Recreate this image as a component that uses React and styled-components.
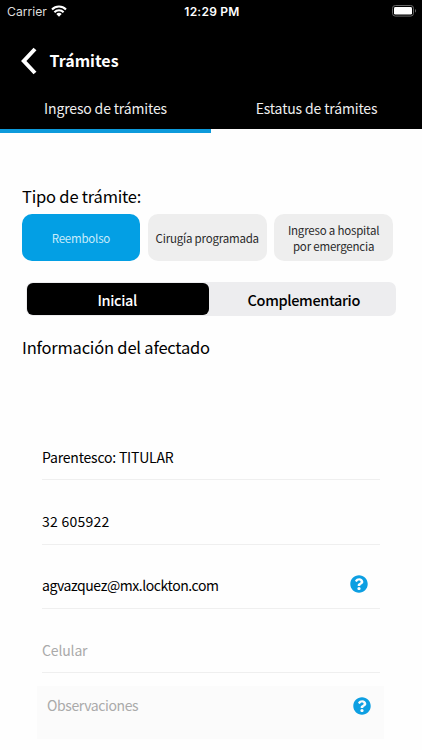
import React, { useState } from 'react';
import styled, { createGlobalStyle } from 'styled-components';
import { FaQuestionCircle } from 'react-icons/fa';

export default function App() {
    const [tab, setTab] = useState(0);
    const [tipo, setTipo] = useState(0);
    const [etapa, setEtapa] = useState(0);

    return (
        <Screen>
            <GlobalStyle />
            <Header>
                <StatusBar>
                    <Carrier>
                        <span>Carrier</span>
                        <Wifi />
                    </Carrier>
                    <Clock>12:29 PM</Clock>
                    <BatterySlot>
                        <Battery />
                    </BatterySlot>
                </StatusBar>
                <TitleBar>
                    <BackIcon />
                    <Title>Trámites</Title>
                </TitleBar>
                <Tabs>
                    <Tab $active={tab === 0} onClick={() => setTab(0)}>Ingreso de trámites</Tab>
                    <Tab $active={tab === 1} onClick={() => setTab(1)}>Estatus de trámites</Tab>
                </Tabs>
            </Header>
            <Content>
                <Heading>Tipo de trámite:</Heading>
                <Options>
                    <Option $active={tipo === 0} onClick={() => setTipo(0)}>Reembolso</Option>
                    <Option $active={tipo === 1} onClick={() => setTipo(1)}>Cirugía programada</Option>
                    <Option $active={tipo === 2} onClick={() => setTipo(2)}>
                        Ingreso a hospital<br />por emergencia
                    </Option>
                </Options>
                <Segmented>
                    <Segment $active={etapa === 0} onClick={() => setEtapa(0)}>Inicial</Segment>
                    <Segment $active={etapa === 1} onClick={() => setEtapa(1)}>Complementario</Segment>
                </Segmented>
                <Heading>Información del afectado</Heading>
                <Form>
                    <Field $spacing="-0.2px">Parentesco: TITULAR</Field>
                    <Field $spacing="0.25px">32 605922</Field>
                    <Field $spacing="-0.42px">
                        agvazquez@mx.lockton.com
                        <HelpIcon />
                    </Field>
                    <Field $empty $spacing="-0.15px">Celular</Field>
                </Form>
                <Notes>
                    Observaciones
                    <HelpIcon />
                </Notes>
            </Content>
        </Screen>
    )
}

function Wifi() {
    return (
        <svg width="16" height="12" viewBox="0 0 16 12" fill="none" stroke="#fff" strokeWidth="2.1">
            <path d="M1 4.4a10 10 0 0 1 14 0" />
            <path d="M3.4 7.2a6.5 6.5 0 0 1 9.2 0" />
            <path d="M5.3 9.1a3.8 3.8 0 0 1 5.4 0L8 11.8z" fill="#fff" stroke="none" />
        </svg>
    )
}

function Battery() {
    return (
        <svg width="25" height="12" viewBox="0 0 25 12">
            <rect x="0.5" y="0.5" width="21" height="10.6" rx="2.8" fill="none" stroke="#666" />
            <rect x="2" y="2" width="18" height="7.6" rx="1.4" fill="#fff" />
            <path d="M23 4v3.6c1.4-.5 1.4-3.1 0-3.6z" fill="#666" />
        </svg>
    )
}

function BackIcon() {
    return (
        <svg width="16" height="28" viewBox="0 0 16 28" fill="none" stroke="#fff" strokeWidth="4">
            <path d="M14 2L2.8 14L14 26" />
        </svg>
    )
}

const GlobalStyle = createGlobalStyle`
 body{
     margin:0;
     background:#fff;
     font-family:"Noto Sans CJK JP","Noto Sans",sans-serif;
 }
 *{
     box-sizing:border-box;
 }
`

const Screen = styled.div`
 width:422px;
 height:750px;
 overflow:hidden;
 background:#fefefe;
 color:#000;
`

const Header = styled.header`
 background:#000;
 color:#fff;
`

const StatusBar = styled.div`
 display:grid;
 grid-template-columns:1fr auto 1fr;
 align-items:center;
 height:22px;
 padding:0 5px 0 7px;
 font-family:Inter,sans-serif;
 font-size:12.2px;
`

const Carrier = styled.div`
 display:flex;
 align-items:center;
 gap:4px;
 color:#ddd;
`

const Clock = styled.div`
 font-size:12px;
 font-weight:600;
 letter-spacing:0.25px;
`

const BatterySlot = styled.div`
 display:flex;
 justify-content:flex-end;
`

const TitleBar = styled.div`
 display:flex;
 align-items:center;
 height:66px;
 padding:12px 0 0 21px;
 gap:12.5px;
`

const Title = styled.h1`
 margin:0 0 2px;
 font-size:16px;
 line-height:24px;
 font-weight:700;
`

const Tabs = styled.div`
 display:flex;
 height:45px;
`

const Tab = styled.div`
 flex:1;
 display:flex;
 align-items:center;
 justify-content:center;
 padding-bottom:2px;
 font-size:14px;
 letter-spacing:-0.15px;
 color:#eee;
 border-bottom:4px solid ${props => props.$active ? '#0d9adb' : '#fefefe'};
`

const Content = styled.main`
 padding:51px 22px 0;
`

const Heading = styled.h2`
 margin:0;
 font-size:16.5px;
 line-height:24px;
 font-weight:400;
 letter-spacing:-0.2px;
`

const Options = styled.div`
 display:flex;
 gap:7.5px;
 margin:6px 7px 0 -0.5px;
`

const Option = styled.div`
 flex:1;
 display:flex;
 align-items:center;
 justify-content:center;
 height:47px;
 border-radius:10px;
 font-size:11.5px;
 line-height:16px;
 letter-spacing:-0.2px;
 text-align:center;
 white-space:nowrap;
 background:${props => props.$active ? '#039fe4' : '#eee'};
 color:${props => props.$active ? '#c9ecfb' : '#2a2a2a'};
`

const Segmented = styled.div`
 display:flex;
 height:34px;
 margin:21px 4px 19px 4px;
 padding:1px;
 border-radius:7px;
 background:#ededef;
`

const Segment = styled.div`
 flex:${props => props.$active ? '0 0 181.5px' : 1};
 display:flex;
 align-items:center;
 justify-content:center;
 padding:${props => props.$active ? '0 1px 0 0' : '0 0 0 4px'};
 border-radius:6px;
 font-size:14.5px;
 font-weight:500;
 letter-spacing:-0.35px;
 background:${props => props.$active ? '#000' : 'transparent'};
 color:${props => props.$active ? '#fff' : '#000'};
`

const Form = styled.div`
 margin:57px 20px 0;
`

const Field = styled.div`
 display:flex;
 align-items:flex-end;
 justify-content:space-between;
 height:64.3px;
 padding:0 12px 11.5px 0;
 border-bottom:1px solid #efefef;
 font-size:14px;
 line-height:22px;
 letter-spacing:${props => props.$spacing};
 color:${props => props.$empty ? '#aaa' : '#000'};
`

const Notes = styled.div`
 display:flex;
 justify-content:space-between;
 height:53px;
 margin:13px 16px 0 15px;
 padding:8px 13px 0 10px;
 background:#fbfbfb;
 font-size:14px;
 line-height:22px;
 letter-spacing:-0.4px;
 color:#aaa;
`

const HelpIcon = styled(FaQuestionCircle)`
 width:18px;
 height:18px;
 margin:3px 0;
 color:#0d9fe2;
`
